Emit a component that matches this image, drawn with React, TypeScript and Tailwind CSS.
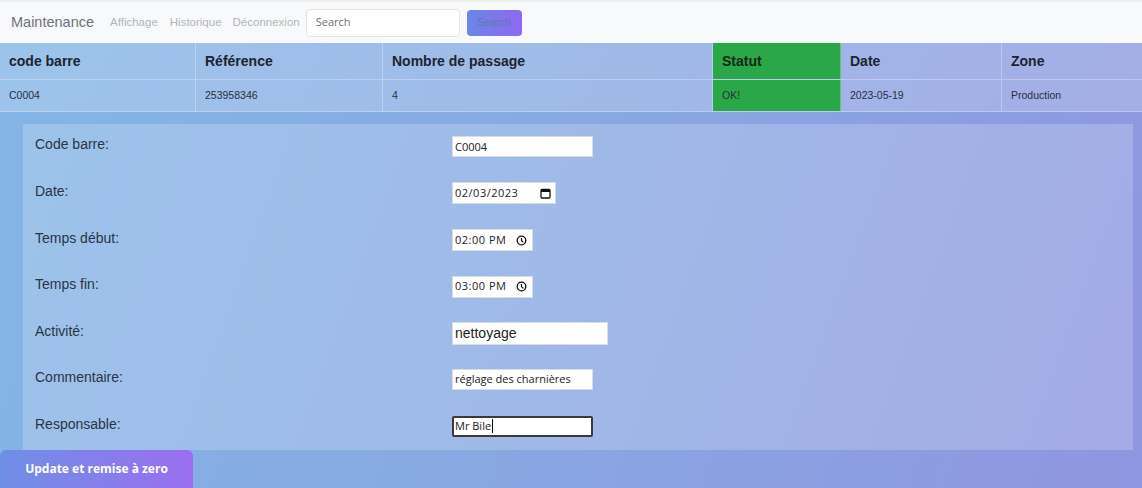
import React from "react";

const cols = [
  { w: "w-[196px]", h: "code barre", v: "C0004" },
  { w: "w-[187px]", h: "Référence", v: "253958346" },
  { w: "w-[330px]", h: "Nombre de passage", v: "4" },
  { w: "w-[128px]", h: "Statut", v: "OK!", green: true },
  { w: "w-[161px]", h: "Date", v: "2023-05-19" },
  { w: "flex-1", h: "Zone", v: "Production" },
];

function CalendarIcon() {
  return (
    <svg width="11" height="11" viewBox="0 0 11 11" className="shrink-0">
      <rect x="1" y="1.5" width="9" height="8.5" rx="1" fill="none" stroke="#111" strokeWidth="1.3" />
      <rect x="1" y="1.5" width="9" height="2.5" fill="#111" />
    </svg>
  );
}

function ClockIcon() {
  return (
    <svg width="11" height="11" viewBox="0 0 11 11" className="shrink-0">
      <circle cx="5.5" cy="5.5" r="4.3" fill="none" stroke="#111" strokeWidth="1.3" />
      <path d="M5.5 3 V5.7 L7.4 7.4" fill="none" stroke="#111" strokeWidth="1.2" />
    </svg>
  );
}

export default function App() {
  return (
    <div className="w-[1142px] h-[488px] overflow-hidden bg-[linear-gradient(110deg,#84b6e6_0%,#88a8e2_50%,#8f95e0_100%)] font-['Liberation_Sans',Arial,sans-serif]">
      {/* navbar */}
      <div className="h-[43px] bg-[#f8f9fa] border-t-2 border-[#eceef0] flex items-center pl-[11px]">
        <span className="text-[14.5px] text-[#6f7378] mr-[16px]">Maintenance</span>
        <span className="text-[11.5px] text-[#b4b6b9] mr-[12px]">Affichage</span>
        <span className="text-[11.5px] text-[#b4b6b9] mr-[11px]">Historique</span>
        <span className="text-[11.5px] text-[#b4b6b9] mr-[6px]">Déconnexion</span>
        <div className="w-[154px] h-[28px] bg-white border border-[#e3e5e8] rounded-[4px] flex items-center pl-[9px] text-[11px] text-[#6c6f73] font-['Open_Sans',sans-serif] mr-[7px]">
          Search
        </div>
        <div className="w-[55px] h-[26px] rounded-[4px] bg-[linear-gradient(90deg,#6b85e8,#8f68f0)] flex items-center justify-center text-[10.5px] text-[#5d78b0]">
          Search
        </div>
      </div>

      {/* table */}
      <div className="flex flex-col bg-white/20">
        <div className="flex h-[37px] border-b border-white/30">
          {cols.map((c, i) => (
            <div
              key={i}
              className={`${c.w} flex items-center pl-[9px] text-[14px] font-bold text-[#1e2330] ${i < 5 ? "border-r border-white/30" : ""} ${c.green ? "bg-[#2aa748] text-[#102a12]" : ""}`}
            >
              {c.h}
            </div>
          ))}
        </div>
        <div className="flex h-[32px] border-b border-white/30">
          {cols.map((c, i) => (
            <div
              key={i}
              className={`${c.w} flex items-center pl-[9px] text-[10.5px] text-[#2a2f40] ${i < 5 ? "border-r border-white/30" : ""} ${c.green ? "bg-[#2aa748] text-[#1a4a22]" : ""}`}
            >
              {c.v}
            </div>
          ))}
        </div>
      </div>

      {/* form card */}
      <div className="pt-[12px] pl-[23px] pr-[9px]">
        <div className="bg-white/20 px-[12px] pt-[12px] pb-[13px] flex flex-col gap-[24.6px] h-[326px]">
          <Row label="Code barre:">
            <div className="w-[141px] h-[21px] bg-white border border-[#d9dce2] px-[2px] text-[11px] text-[#222] font-['Open_Sans',sans-serif] flex items-center">C0004</div>
          </Row>
          <Row label="Date:">
            <div className="w-[104px] h-[22px] bg-white border border-[#d9dce2] pl-[2px] pr-[4px] text-[11px] tracking-[0.5px] text-[#222] font-['Open_Sans',sans-serif] flex items-center justify-between">
              <span>02/03/2023</span>
              <CalendarIcon />
            </div>
          </Row>
          <Row label="Temps début:">
            <div className="w-[81px] h-[22px] bg-white border border-[#d9dce2] pl-[2px] pr-[5px] text-[11px] tracking-[0.5px] text-[#222] font-['Open_Sans',sans-serif] flex items-center justify-between">
              <span>02:00 PM</span>
              <ClockIcon />
            </div>
          </Row>
          <Row label="Temps fin:">
            <div className="w-[81px] h-[22px] bg-white border border-[#d9dce2] pl-[2px] pr-[5px] text-[11px] tracking-[0.5px] text-[#222] font-['Open_Sans',sans-serif] flex items-center justify-between">
              <span>03:00 PM</span>
              <ClockIcon />
            </div>
          </Row>
          <Row label="Activité:">
            <div className="w-[156px] h-[23px] bg-white border border-[#d9dce2] px-[2px] text-[14px] text-[#222] flex items-center">nettoyage</div>
          </Row>
          <Row label="Commentaire:">
            <div className="w-[141px] h-[21px] bg-white border border-[#d9dce2] px-[2px] text-[11px] text-[#222] font-['Open_Sans',sans-serif] flex items-center">réglage des charnières</div>
          </Row>
          <Row label="Responsable:">
            <div className="w-[141px] h-[21px] bg-white border-2 border-[#3a3a3a] rounded-[2px] px-[1px] text-[11px] text-[#222] font-['Open_Sans',sans-serif] flex items-center">
              Mr Bile<span className="inline-block w-[1px] h-[14px] bg-black ml-[1px]"></span>
            </div>
          </Row>
        </div>
      </div>

      <button className="w-[193px] h-[38px] rounded-t-[6px] bg-[linear-gradient(90deg,#6f8fe6,#9b6ef0)] text-white text-[12px] font-bold font-['Open_Sans',sans-serif] flex items-center justify-center">
        Update et remise à zero
      </button>
    </div>
  );
}

function Row({ label, children }: { label: string; children: React.ReactNode }) {
  return (
    <div className="flex items-center h-[22px]">
      <div className="w-[417px] text-[14px] text-[#2b3445] -mt-[4px]">{label}</div>
      {children}
    </div>
  );
}
